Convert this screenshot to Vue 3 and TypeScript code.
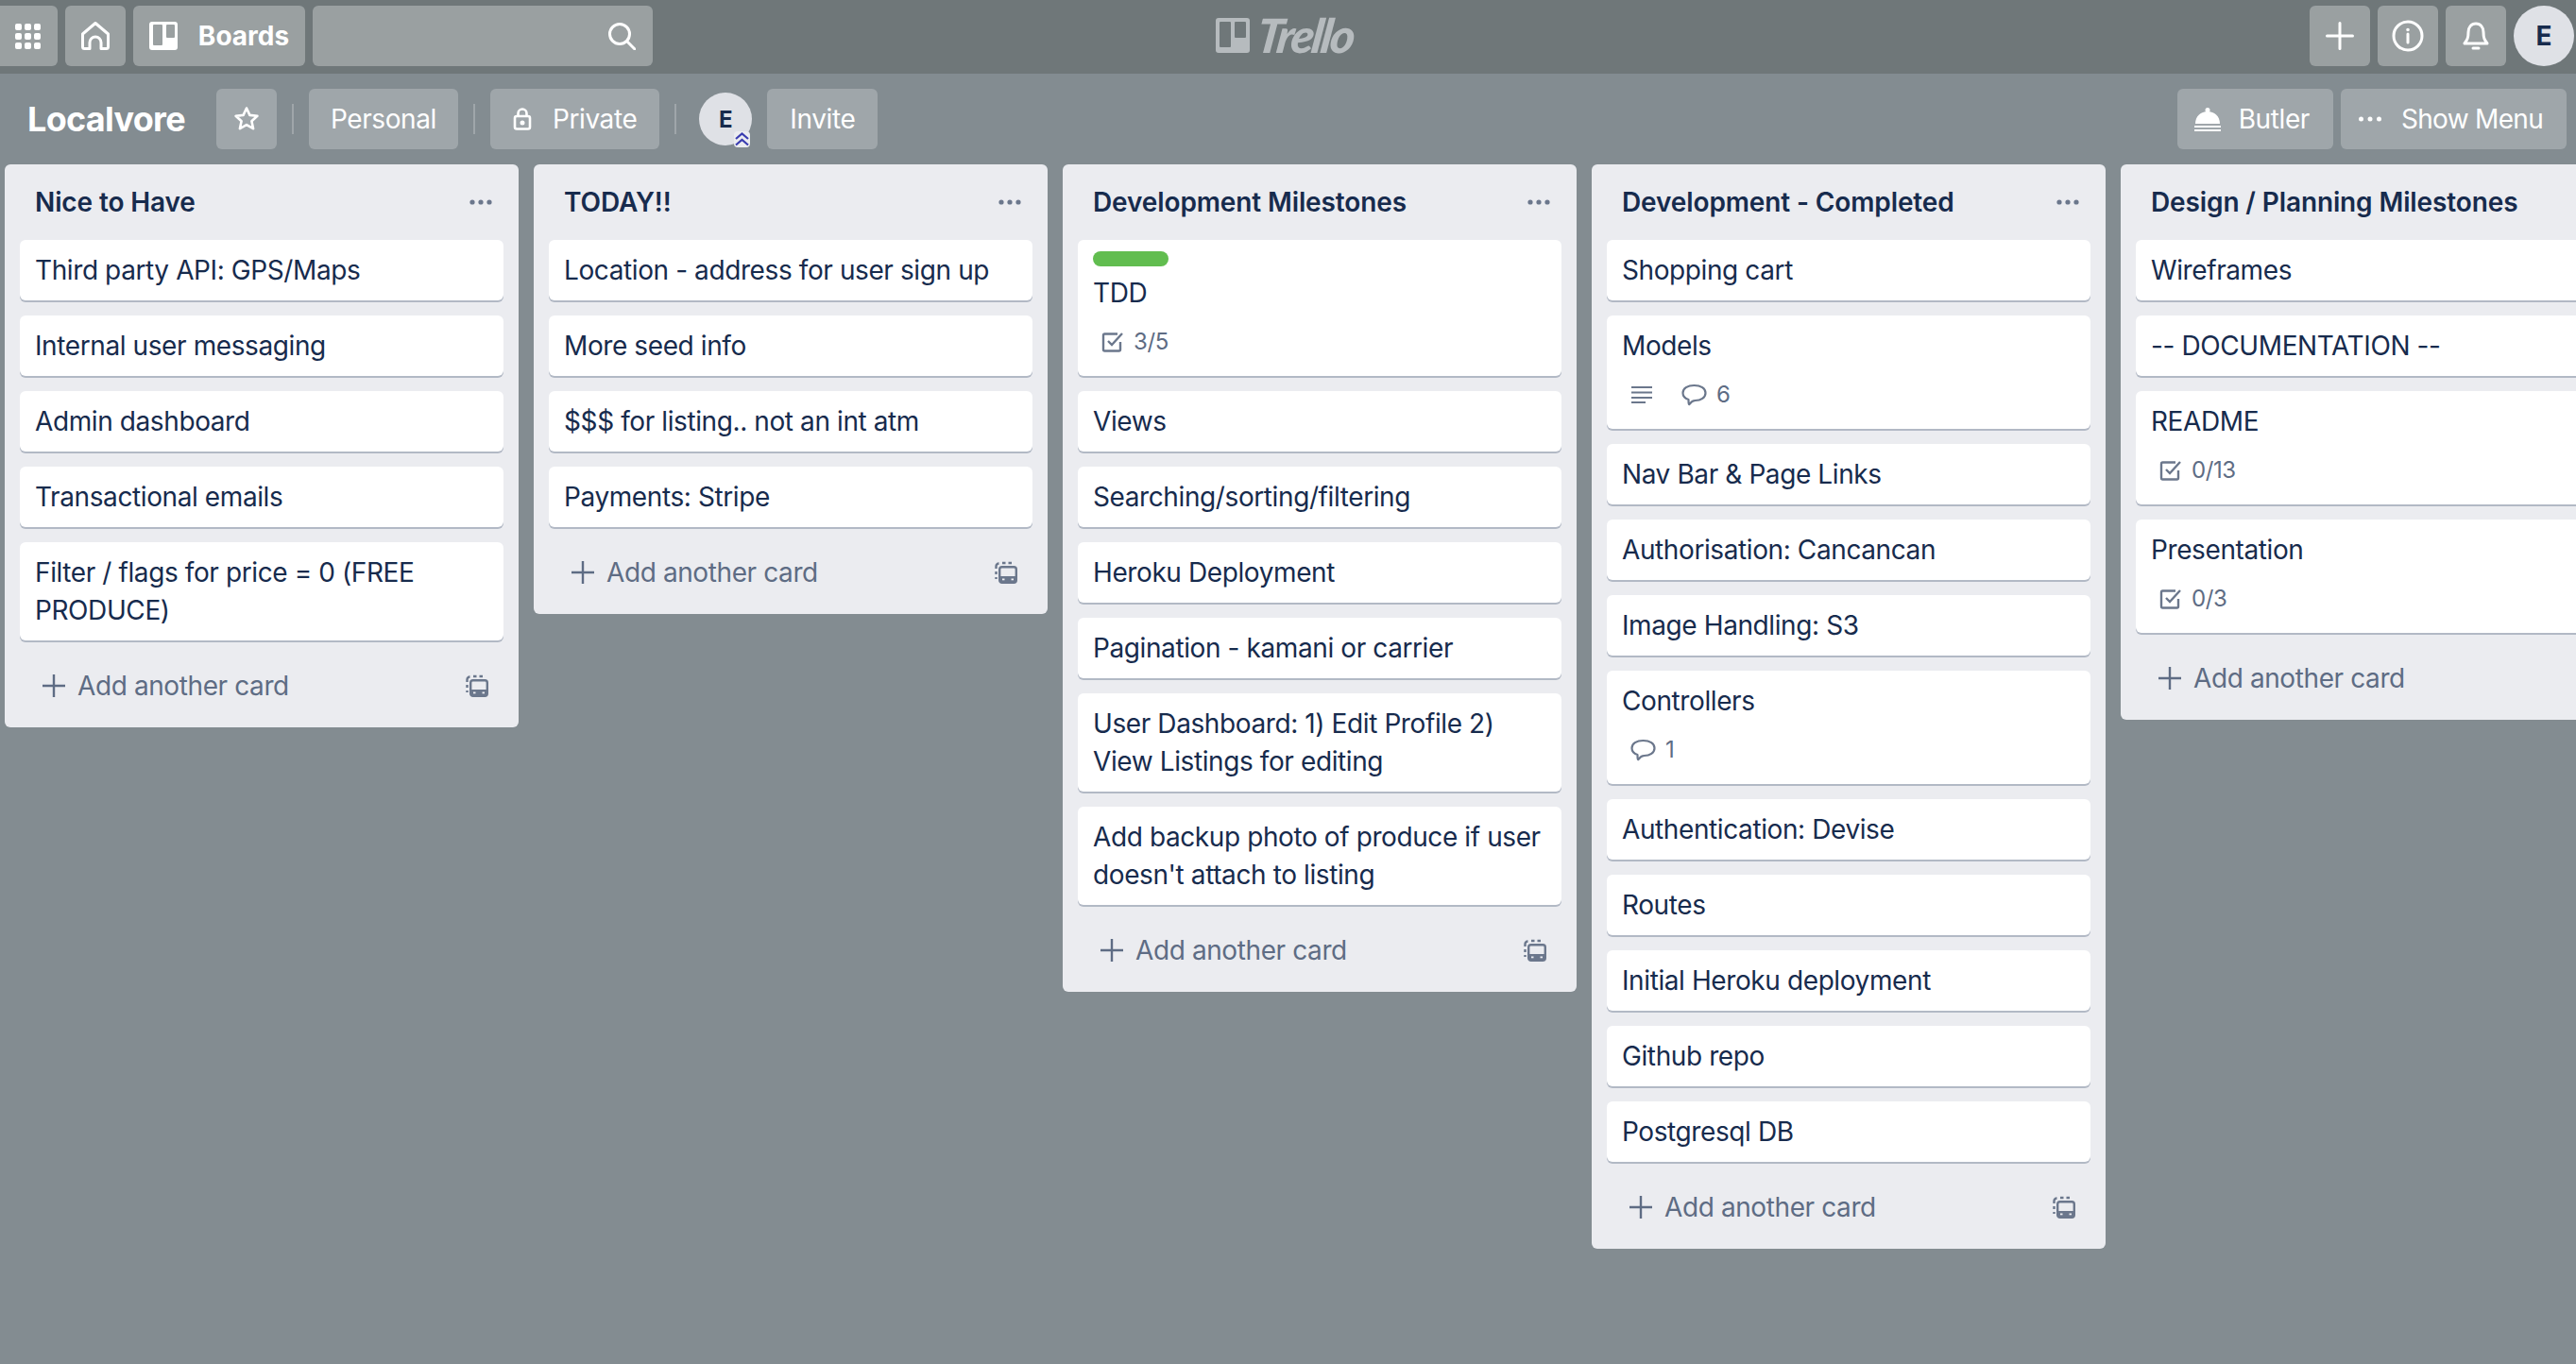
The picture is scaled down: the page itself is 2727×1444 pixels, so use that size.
<script setup lang="ts">
interface Card {
  title: string
  label?: boolean
  checklist?: string
  desc?: boolean
  comments?: number
}

interface List {
  name: string
  cards: Card[]
}

const lists: List[] = [
  {
    name: 'Nice to Have',
    cards: [
      { title: 'Third party API: GPS/Maps' },
      { title: 'Internal user messaging' },
      { title: 'Admin dashboard' },
      { title: 'Transactional emails' },
      { title: 'Filter / flags for price = 0 (FREE PRODUCE)' },
    ],
  },
  {
    name: 'TODAY!!',
    cards: [
      { title: 'Location - address for user sign up' },
      { title: 'More seed info' },
      { title: '$$$ for listing.. not an int atm' },
      { title: 'Payments: Stripe' },
    ],
  },
  {
    name: 'Development Milestones',
    cards: [
      { title: 'TDD', label: true, checklist: '3/5' },
      { title: 'Views' },
      { title: 'Searching/sorting/filtering' },
      { title: 'Heroku Deployment' },
      { title: 'Pagination - kamani or carrier' },
      { title: 'User Dashboard: 1) Edit Profile 2) View Listings for editing' },
      { title: "Add backup photo of produce if user doesn't attach to listing" },
    ],
  },
  {
    name: 'Development - Completed',
    cards: [
      { title: 'Shopping cart' },
      { title: 'Models', desc: true, comments: 6 },
      { title: 'Nav Bar & Page Links' },
      { title: 'Authorisation: Cancancan' },
      { title: 'Image Handling: S3' },
      { title: 'Controllers', comments: 1 },
      { title: 'Authentication: Devise' },
      { title: 'Routes' },
      { title: 'Initial Heroku deployment' },
      { title: 'Github repo' },
      { title: 'Postgresql DB' },
    ],
  },
  {
    name: 'Design / Planning Milestones',
    cards: [
      { title: 'Wireframes' },
      { title: '-- DOCUMENTATION --' },
      { title: 'README', checklist: '0/13' },
      { title: 'Presentation', checklist: '0/3' },
    ],
  },
]
</script>

<template>
  <div class="page">
    <header class="topbar">
      <div class="topbar-left">
        <button class="nav-btn apps">
          <svg width="27" height="27" viewBox="0 0 27 27" fill="#fff">
            <rect v-for="n in 9" :key="n" :x="((n - 1) % 3) * 10" :y="Math.floor((n - 1) / 3) * 10" width="7" height="7" rx="2" />
          </svg>
        </button>
        <button class="nav-btn square">
          <svg width="30" height="30" viewBox="0 0 30 30" fill="none" stroke="#fff" stroke-width="3" stroke-linejoin="round">
            <path d="M1.500 13 15 1.500 28.500 13v13.500a2 2 0 0 1-2 2H21V22a6 6 0 0 0-12 0v6.500H3.500a2 2 0 0 1-2-2z" />
          </svg>
        </button>
        <button class="nav-btn boards">
          <svg width="30" height="30" viewBox="0 0 30 30">
            <rect width="30" height="30" rx="3" fill="#fff" />
            <rect x="4" y="3" width="10" height="22" rx="1" fill="#9aa0a1" />
            <rect x="18" y="3" width="9" height="14" rx="1" fill="#9aa0a1" />
          </svg>
          <span>Boards</span>
        </button>
        <div class="search">
          <svg width="30" height="30" viewBox="0 0 30 30" fill="none" stroke="#fff" stroke-width="3" stroke-linecap="round">
            <circle cx="13" cy="13" r="10.500" />
            <path d="m21 21 8 8" />
          </svg>
        </div>
      </div>
      <div class="logo">
        <svg width="36" height="37" viewBox="0 0 36 37">
          <rect width="36" height="37" rx="3" fill="#b6bbbe" />
          <rect x="4" y="4" width="12" height="27" rx="1" fill="#6f7779" />
          <rect x="20" y="4" width="12" height="17" rx="1" fill="#6f7779" />
        </svg>
        <span class="wordmark">Trello</span>
      </div>
      <div class="topbar-right">
        <button class="nav-btn square">
          <svg width="30" height="30" viewBox="0 0 30 30" stroke="#fff" stroke-width="3" stroke-linecap="round">
            <path d="M15 1.500v27M1.500 15h27" />
          </svg>
        </button>
        <button class="nav-btn square">
          <svg width="34" height="34" viewBox="0 0 34 34" fill="none" stroke="#fff" stroke-width="3">
            <circle cx="17" cy="17" r="15" />
            <path d="M17 15v9" stroke-linecap="round" />
            <circle cx="17" cy="10.500" r="1" stroke-width="1.600" fill="#fff" />
          </svg>
        </button>
        <button class="nav-btn square">
          <svg width="28" height="32" viewBox="0 0 28 32" fill="none" stroke="#fff" stroke-width="3" stroke-linejoin="round">
            <path d="M14 3c-5 0-8 4-8 9 0 6-1 8-4 12h24c-3-4-4-6-4-12 0-5-3-9-8-9z" />
            <path d="M11 29h6" stroke-linecap="round" />
          </svg>
        </button>
        <div class="user-avatar">E</div>
      </div>
    </header>

    <section class="board-header">
      <div class="board-header-left">
        <h1 class="board-title">Localvore</h1>
        <button class="head-btn star">
          <svg width="28" height="28" viewBox="0 0 28 28" fill="none" stroke="#fff" stroke-width="2.600" stroke-linejoin="round">
            <path d="m14 2.500 3.400 7.400 8 .9-6 5.400 1.700 8-7.100-4.100-7.100 4.100 1.700-8-6-5.400 8-.9z" />
          </svg>
        </button>
        <span class="divider" />
        <button class="head-btn personal">Personal</button>
        <span class="divider" />
        <button class="head-btn private">
          <svg width="20" height="24" viewBox="0 0 20 24" fill="none" stroke="#fff" stroke-width="2.600">
            <rect x="2" y="9" width="16" height="13.500" rx="2" />
            <path d="M5.500 9V6a4.500 4.500 0 0 1 9 0v3" />
            <circle cx="10" cy="16" r="1.200" fill="#fff" />
          </svg>
          Private
        </button>
        <span class="divider" />
        <div class="member">
          E
          <svg class="member-badge" width="17" height="17" viewBox="0 0 17 17" fill="none" stroke="#3a3db0" stroke-width="2.200">
            <path d="m2 8 6.500-5.500L15 8M2 14.500 8.500 9l6.500 5.500" />
          </svg>
        </div>
        <button class="head-btn">Invite</button>
      </div>
      <div class="board-header-right">
        <button class="head-btn butler">
          <svg width="28" height="25" viewBox="0 0 28 25" fill="#fff">
            <circle cx="14" cy="2.500" r="2.500" />
            <path d="M1 17C1 9 7 4 14 4s13 5 13 13z" />
            <rect y="19" width="28" height="2" />
            <rect y="23" width="28" height="2" />
          </svg>
          Butler
        </button>
        <button class="head-btn show-menu">
          <svg width="24" height="6" viewBox="0 0 24 6" fill="#fff">
            <circle cx="2.500" cy="3" r="2.500" />
            <circle cx="12" cy="3" r="2.500" />
            <circle cx="21.500" cy="3" r="2.500" />
          </svg>
          Show Menu
        </button>
      </div>
    </section>

    <main class="board">
      <div v-for="list in lists" :key="list.name" class="list">
        <div class="list-head">
          <h2 class="list-name">{{ list.name }}</h2>
          <svg class="list-more" width="24" height="6" viewBox="0 0 24 6" fill="#6b778c">
            <circle cx="3" cy="3" r="2.600" />
            <circle cx="12" cy="3" r="2.600" />
            <circle cx="21" cy="3" r="2.600" />
          </svg>
        </div>
        <div class="cards">
          <div v-for="card in list.cards" :key="card.title" class="card">
            <span v-if="card.label" class="label" />
            <div class="card-title">{{ card.title }}</div>
            <div v-if="card.checklist || card.desc || card.comments" class="badges">
              <span v-if="card.desc" class="badge">
                <svg width="24" height="20" viewBox="0 0 24 20" stroke="#6b778c" stroke-width="2">
                  <path d="M1 2h22M1 7.500h22M1 13h22M1 18h15" />
                </svg>
              </span>
              <span v-if="card.checklist" class="badge">
                <svg width="24" height="24" viewBox="0 0 24 24" fill="none" stroke="#6b778c" stroke-width="2.400">
                  <path d="M20 12v8a1.500 1.500 0 0 1-1.500 1.500h-15A1.500 1.500 0 0 1 2 20V5a1.500 1.500 0 0 1 1.500-1.500H17" />
                  <path d="m7 11 4 4 11-12" />
                </svg>
                {{ card.checklist }}
              </span>
              <span v-if="card.comments" class="badge">
                <svg width="27" height="24" viewBox="0 0 26 24" fill="none" stroke="#6b778c" stroke-width="2.200" stroke-linejoin="round">
                  <path d="M13 2c7 0 12 3 12 8s-5 8-11 8c-2 0-4 1-6 4-1 .5-1-3-1-5-3-1-6-3-6-7 0-5 5-8 12-8z" />
                </svg>
                {{ card.comments }}
              </span>
            </div>
          </div>
        </div>
        <div class="list-foot">
          <div class="add-card">
            <svg width="24" height="24" viewBox="0 0 24 24" stroke="#5e6c84" stroke-width="2.400">
              <path d="M12 0v24M0 12h24" />
            </svg>
            Add another card
          </div>
          <svg width="24" height="24" viewBox="0 0 24 24" fill="none" stroke="#6b778c" stroke-width="2.400">
            <path d="M1.500 19v-2M1.500 14v-3M1.500 8V5.500a3 3 0 0 1 3-3M8 2h3.500M14.500 2H18" />
            <rect x="5.200" y="6.200" width="17.600" height="16.600" rx="2.500" />
            <rect x="5" y="16" width="18" height="7" rx="1" fill="#6b778c" stroke="none" />
            <rect x="8" y="18.500" width="2.500" height="1.800" fill="#ebecf0" stroke="none" />
            <rect x="17.500" y="18.500" width="2.500" height="1.800" fill="#ebecf0" stroke="none" />
          </svg>
        </div>
      </div>
    </main>
  </div>
</template>

<style>
html, body {
  margin: 0;
  background: #838c91;
  overflow: hidden;
}
</style>

<style scoped>
.page {
  width: 2727px;
  height: 1444px;
  overflow: hidden;
  background: #838c91;
  font-family: Inter, "Noto Sans", sans-serif;
  color: #172b4d;
  font-size: 28px;
  letter-spacing: -0.4px;
}

button {
  font: inherit;
  letter-spacing: inherit;
  border: 0;
  color: #fff;
  cursor: pointer;
}

.topbar {
  position: relative;
  height: 78px;
  box-sizing: border-box;
  padding: 6px 2px 8px 0;
  background: #6f7779;
  display: flex;
  justify-content: space-between;
}

.topbar-left,
.topbar-right {
  display: flex;
  gap: 8px;
}

.nav-btn {
  height: 64px;
  padding: 0;
  border-radius: 6px;
  background: #9aa0a1;
  display: flex;
  align-items: center;
  justify-content: center;
}

.apps {
  width: 61px;
  padding-right: 2px;
  border-radius: 0 6px 6px 0;
}

.square {
  width: 64px;
}

.boards {
  width: 182px;
  gap: 22px;
  font-weight: 700;
  letter-spacing: 0;
}

.search {
  width: 360px;
  height: 64px;
  box-sizing: border-box;
  padding-right: 18px;
  border-radius: 6px;
  background: #9aa0a1;
  display: flex;
  align-items: center;
  justify-content: flex-end;
}

.logo {
  position: absolute;
  left: 1287px;
  top: 19px;
  display: flex;
  align-items: center;
  gap: 8px;
}

.wordmark {
  font-family: Lato, sans-serif;
  font-style: italic;
  font-weight: 900;
  font-size: 50px;
  line-height: 37px;
  letter-spacing: -2.5px;
  color: #b6bbbe;
  transform: skewX(-8deg);
}

.user-avatar {
  width: 64px;
  height: 64px;
  border-radius: 50%;
  background: #dfe1e6;
  font-weight: 700;
  letter-spacing: 0;
  display: flex;
  align-items: center;
  justify-content: center;
}

.board-header {
  height: 96px;
  box-sizing: border-box;
  padding: 16px 10px 16px 29px;
  display: flex;
  justify-content: space-between;
}

.board-header-left,
.board-header-right {
  display: flex;
  align-items: center;
  gap: 8px;
}

.board-title {
  margin: 0 25px 0 0;
  font-size: 36px;
  font-weight: 700;
  letter-spacing: -0.7px;
  color: #fff;
}

.head-btn {
  height: 64px;
  padding: 0 24px;
  border-radius: 6px;
  background: #9fa6aa;
  display: flex;
  align-items: center;
  gap: 20px;
}

.personal {
  width: 158px;
  padding: 0;
  justify-content: center;
}

.private {
  gap: 22px;
}

.butler {
  padding: 0 25px 0 18px;
  gap: 19px;
}

.show-menu {
  padding: 0 25px 0 19px;
  gap: 21px;
  letter-spacing: -0.7px;
}

.star {
  width: 64px;
  padding: 0;
  justify-content: center;
}

.divider {
  width: 2px;
  height: 32px;
  margin: 0 8px;
  background: #9fa6aa;
}

.member {
  position: relative;
  width: 56px;
  height: 56px;
  margin: 0 8px;
  border-radius: 50%;
  background: #dfe1e6;
  font-size: 24px;
  font-weight: 700;
  letter-spacing: 0;
  display: flex;
  align-items: center;
  justify-content: center;
}

.member-badge {
  position: absolute;
  right: 2px;
  bottom: -2px;
  background: #ebecf0;
  border-radius: 4px;
}

.board {
  padding: 0 5px;
  display: flex;
  gap: 16px;
  align-items: flex-start;
}

.list {
  flex: 0 0 544px;
  box-sizing: border-box;
  padding: 0 16px;
  border-radius: 6px;
  background: #ebecf0;
}

.list-head {
  height: 80px;
  display: flex;
  align-items: center;
  justify-content: space-between;
  padding: 0 12px 0 16px;
}

.list-name {
  margin: 0;
  font-size: 28px;
  font-weight: 600;
  letter-spacing: -0.12px;
  line-height: 40px;
}

.cards {
  display: flex;
  flex-direction: column;
  gap: 16px;
}

.card {
  padding: 12px 16px;
  border-radius: 6px;
  background: #fff;
  line-height: 40px;
  box-shadow: 0 2px 0 rgba(9, 30, 66, 0.25);
}

.label {
  display: block;
  width: 80px;
  height: 16px;
  margin-bottom: 8px;
  border-radius: 8px;
  background: #61bd4f;
}

.badges {
  display: flex;
  gap: 30px;
  height: 40px;
  margin-top: 12px;
  margin-bottom: 4px;
  padding-left: 9px;
  font-size: 24px;
  color: #5e6c84;
}

.badge {
  display: flex;
  align-items: center;
  gap: 10px;
}

.list-foot {
  height: 92px;
  box-sizing: border-box;
  padding: 3px 16px 0 24px;
  display: flex;
  align-items: center;
  justify-content: space-between;
  color: #5e6c84;
}

.add-card {
  display: flex;
  align-items: center;
  gap: 13px;
}
</style>
